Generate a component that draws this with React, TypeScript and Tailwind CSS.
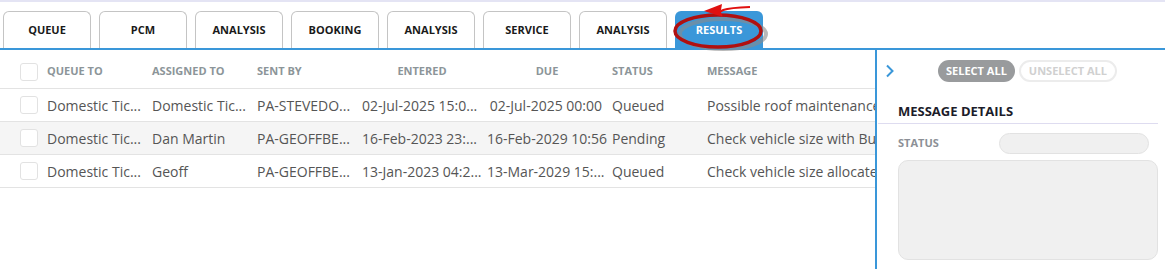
import React from 'react';

const tabs = ['QUEUE', 'PCM', 'ANALYSIS', 'BOOKING', 'ANALYSIS', 'SERVICE', 'ANALYSIS', 'RESULTS'];

const rows = [
  {
    queue: 'Domestic Tic...',
    assigned: 'Domestic Tic...',
    sent: 'PA-STEVEDO...',
    entered: '02-Jul-2025 15:0...',
    due: '02-Jul-2025 00:00',
    status: 'Queued',
    message: 'Possible roof maintenance required before departure',
  },
  {
    queue: 'Domestic Tic...',
    assigned: 'Dan Martin',
    sent: 'PA-GEOFFBE...',
    entered: '16-Feb-2023 23:...',
    due: '16-Feb-2029 10:56',
    status: 'Pending',
    message: 'Check vehicle size with Bus operator',
  },
  {
    queue: 'Domestic Tic...',
    assigned: 'Geoff',
    sent: 'PA-GEOFFBE...',
    entered: '13-Jan-2023 04:2...',
    due: '13-Mar-2029 15:...',
    status: 'Queued',
    message: 'Check vehicle size allocated for the trip',
  },
];

function Checkbox() {
  return <div className="w-[18px] h-[18px] rounded-[3px] border border-[#e2e2e2] bg-white shrink-0" />;
}

export default function App() {
  return (
    <div
      className="relative w-[1165px] h-[269px] bg-white overflow-hidden border-t-2 border-[#e4e4f4]"
      style={{ fontFamily: '"Open Sans", "Noto Sans", sans-serif' }}
    >
      {/* tabs */}
      <div className="flex gap-2 pl-[3px] pt-[9px] border-b-2 border-[#3a97d9]">
        {tabs.map((t, i) =>
          t === 'RESULTS' ? (
            <div
              key={i}
              className="w-[88px] h-[37px] pt-[1px] rounded-t-[6px] bg-[#3a97d9] text-white text-[11px] font-bold flex items-center justify-center"
            >
              {t}
            </div>
          ) : (
            <div
              key={i}
              className="w-[88px] h-[37px] pt-[1px] rounded-t-[6px] border border-b-0 border-[#c4c4c4] text-[#1a1a1a] text-[11px] font-bold flex items-center justify-center"
            >
              {t}
            </div>
          )
        )}
      </div>

      <div className="flex h-[219px]">
        {/* table */}
        <div className="w-[875px] shrink-0 overflow-hidden">
          <div className="pt-[8px]">
            <div className="flex items-center h-[31px] pb-[3px] border-b border-[#e3e3e3] text-[11px] font-bold text-[#8c9599] whitespace-nowrap">
              <div className="w-[47px] shrink-0 pl-[20px]"><Checkbox /></div>
              <div className="w-[105px] shrink-0">QUEUE TO</div>
              <div className="w-[105px] shrink-0">ASSIGNED TO</div>
              <div className="w-[105px] shrink-0">SENT BY</div>
              <div className="w-[120px] shrink-0 text-center">ENTERED</div>
              <div className="w-[130px] shrink-0 text-center">DUE</div>
              <div className="w-[95px] shrink-0">STATUS</div>
              <div className="shrink-0">MESSAGE</div>
            </div>
            {rows.map((r, i) => (
              <div
                key={i}
                className={`flex items-center h-[33px] border-b border-[#e3e3e3] text-[14px] text-[#555] whitespace-nowrap ${i === 1 ? 'bg-[#f5f5f5]' : 'bg-white'}`}
              >
                <div className="w-[47px] shrink-0 pl-[20px]"><Checkbox /></div>
                <div className="w-[105px] shrink-0 overflow-hidden">{r.queue}</div>
                <div className="w-[105px] shrink-0 overflow-hidden">{r.assigned}</div>
                <div className="w-[105px] shrink-0 overflow-hidden">{r.sent}</div>
                <div className="w-[125px] shrink-0 overflow-hidden">{r.entered}</div>
                <div className="w-[125px] shrink-0 overflow-hidden text-right pr-[10px]">{r.due}</div>
                <div className="w-[95px] shrink-0">{r.status}</div>
                <div className="shrink-0">{r.message}</div>
              </div>
            ))}
          </div>
        </div>

        {/* details panel */}
        <div className="flex-1 border-l-2 border-[#3a97d9] pt-[10px]">
          <div className="flex items-center h-[22px]">
            <svg width="10" height="14" viewBox="0 0 10 14" className="ml-[8px]">
              <path d="M2 1.5 L7.5 7 L2 12.5" fill="none" stroke="#3a97d9" strokeWidth="2" />
            </svg>
            <div className="ml-[43px] h-[22px] px-[8px] rounded-full bg-[#999b9d] text-white text-[11px] font-bold flex items-center">
              SELECT ALL
            </div>
            <div className="ml-[4px] h-[22px] px-[8px] rounded-full border-2 border-[#ececec] text-[#d0d0d0] text-[11px] font-bold flex items-center">
              UNSELECT ALL
            </div>
          </div>
          <div className="mt-[20px] ml-[1px] mr-[7px] border-b border-[#dedcf0] pl-[20px] pb-[1px] text-[13px] font-bold text-[#1c1c2a]">
            MESSAGE DETAILS
          </div>
          <div className="flex items-center mt-[9px] pl-[21px] pr-[16px]">
            <div className="w-[101px] text-[11px] font-bold text-[#8c9096]">STATUS</div>
            <div className="flex-1 h-[21px] rounded-full bg-[#f0f0f0] border border-[#e2e2e2]" />
          </div>
          <div className="ml-[21px] mr-[7px] mt-[6px] h-[100px] rounded-[10px] bg-[#f0f0f0] border border-[#e2e2e2]" />
        </div>
      </div>

      {/* red annotation */}
      <svg className="absolute left-0 top-0 pointer-events-none" width="1165" height="60">
        <ellipse cx="723" cy="32" rx="43" ry="15" fill="none" stroke="#8a8a8a" strokeOpacity="0.6" strokeWidth="4" />
        <ellipse cx="718" cy="29" rx="43" ry="16" fill="none" stroke="#b01010" strokeWidth="3.5" />
        <path d="M722 14 C 716 9, 722 6, 750 5" fill="none" stroke="#e01010" strokeWidth="2" />
        <path d="M704 9 L 722 2 L 720 14 Z" fill="#e01010" />
      </svg>
    </div>
  );
}
